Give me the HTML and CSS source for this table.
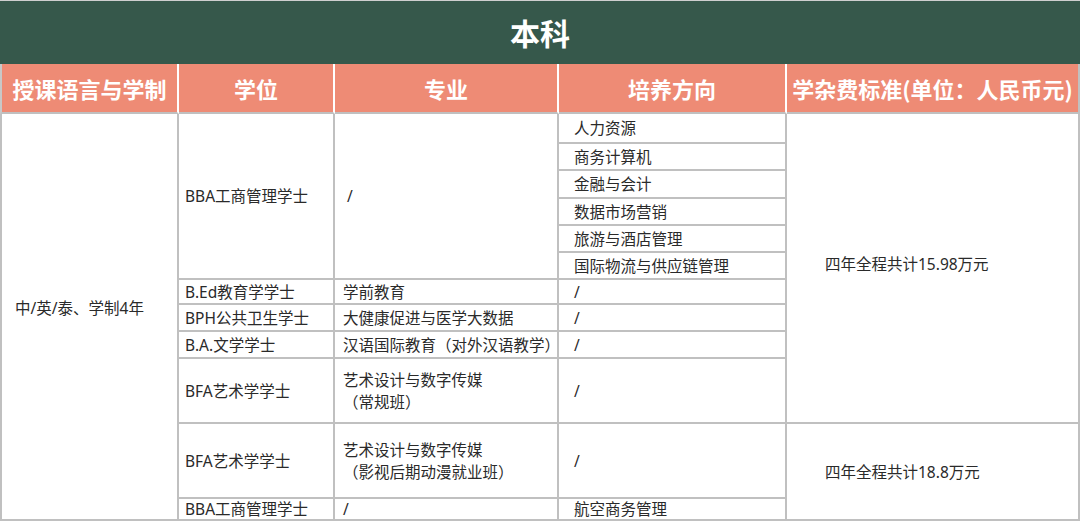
FILE: index.html
```html
<!DOCTYPE html>
<html lang="zh-CN">
<head>
<meta charset="utf-8">
<title>本科</title>
<link rel="stylesheet" href="styles.css">
</head>
<body>
<div class="sheet">
  <div class="title">本科</div>
  <table class="grid">
    <colgroup>
      <col class="c1"><col class="c2"><col class="c3"><col class="c4"><col class="c5">
    </colgroup>
    <thead>
      <tr class="head">
        <th class="first">授课语言与学制</th>
        <th>学位</th>
        <th>专业</th>
        <th>培养方向</th>
        <th class="last">学杂费标准(单位：人民币元)</th>
      </tr>
    </thead>
    <tbody>
      <tr class="h30">
        <td class="first lang" rowspan="12">中/英/泰、学制4年</td>
        <td class="deg" rowspan="6">BBA工商管理学士</td>
        <td class="maj" rowspan="6">&nbsp;/</td>
        <td class="dir">人力资源</td>
        <td class="fee fee1" rowspan="10">四年全程共计15.98万元</td>
      </tr>
      <tr class="h27"><td class="dir">商务计算机</td></tr>
      <tr class="h28"><td class="dir">金融与会计</td></tr>
      <tr class="h27"><td class="dir">数据市场营销</td></tr>
      <tr class="h27"><td class="dir">旅游与酒店管理</td></tr>
      <tr class="h27"><td class="dir">国际物流与供应链管理</td></tr>
      <tr class="h25">
        <td class="deg">B.Ed教育学学士</td>
        <td class="maj">学前教育</td>
        <td class="dir">/</td>
      </tr>
      <tr class="h27">
        <td class="deg">BPH公共卫生学士</td>
        <td class="maj">大健康促进与医学大数据</td>
        <td class="dir">/</td>
      </tr>
      <tr class="h27">
        <td class="deg">B.A.文学学士</td>
        <td class="maj">汉语国际教育（对外汉语教学）</td>
        <td class="dir">/</td>
      </tr>
      <tr class="h65">
        <td class="deg">BFA艺术学学士</td>
        <td class="maj two">艺术设计与数字传媒<br>（常规班）</td>
        <td class="dir">/</td>
      </tr>
      <tr class="h75">
        <td class="deg">BFA艺术学学士</td>
        <td class="maj two">艺术设计与数字传媒<br>（影视后期动漫就业班）</td>
        <td class="dir">/</td>
        <td class="fee fee2" rowspan="2">四年全程共计18.8万元</td>
      </tr>
      <tr class="h22">
        <td class="deg">BBA工商管理学士</td>
        <td class="maj">/</td>
        <td class="dir">航空商务管理</td>
      </tr>
    </tbody>
  </table>
</div>
</body>
</html>
```

FILE: styles.css
```css
html, body {
  margin: 0;
  padding: 0;
  background: #ffffff;
}

body {
  font-family: "Noto Sans", "Noto Sans CJK SC", sans-serif;
  color: #2a2a2a;
}

.sheet {
  width: 1080px;
}

.title {
  height: 63px;
  border-top: 1px solid #cfcfcf;
  background: #36584b;
  color: #ffffff;
  font-family: "Noto Sans CJK SC", sans-serif;
  font-size: 30px;
  font-weight: 700;
  line-height: 63px;
  text-align: center;
}

.grid {
  width: 1080px;
  table-layout: fixed;
  border-collapse: separate;
  border-spacing: 0;
}

.c1 { width: 179px; }
.c2 { width: 156px; }
.c3 { width: 224px; }
.c4 { width: 228px; }
.c5 { width: 293px; }

.head {
  height: 50px;
}

.head th {
  background: #ee8b75;
  color: #ffffff;
  font-family: "Noto Sans CJK SC", sans-serif;
  font-size: 22px;
  font-weight: 700;
  line-height: 28px;
  padding: 0;
  text-align: center;
  white-space: nowrap;
  border-right: 2px solid #ffffff;
  border-bottom: 2px solid #c0c0c0;
}

.head th.first {
  border-left: 2px solid #c8c8c8;
}

.head th.last {
  border-right: 2px solid #c0c0c0;
}

tbody td {
  font-size: 15.5px;
  line-height: 20px;
  padding: 0;
  white-space: nowrap;
  border-right: 2px solid #c0c0c0;
  border-bottom: 2px solid #c0c0c0;
  vertical-align: middle;
}

tbody td.first {
  border-left: 2px solid #c0c0c0;
}

.h22 { height: 22px; }
.h25 { height: 25px; }
.h27 { height: 27px; }
.h28 { height: 28px; }
.h30 { height: 30px; }
.h65 { height: 65px; }
.h75 { height: 75px; }

.lang {
  padding: 0 0 18px 13px;
}

.deg {
  padding-left: 6px;
}

.maj {
  padding-left: 8px;
}

.maj.two {
  line-height: 22px;
}

.dir {
  padding-left: 15px;
}

.fee {
  padding-left: 38px;
}

.fee1 {
  padding-bottom: 8px;
}
```
